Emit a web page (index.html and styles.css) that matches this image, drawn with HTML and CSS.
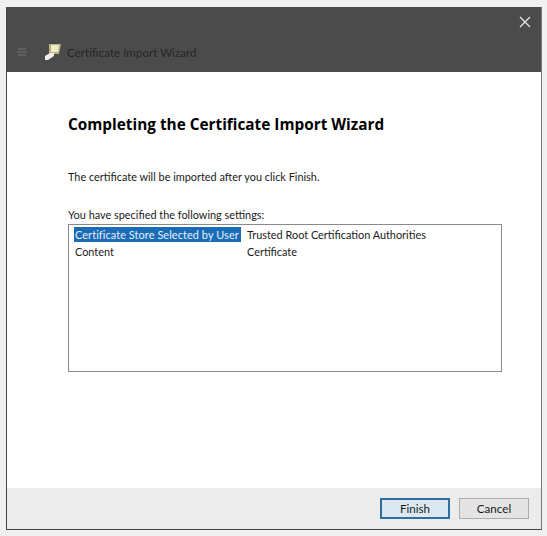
FILE: index.html
```html
<!DOCTYPE html>
<html lang="en">
<head>
<meta charset="utf-8">
<title>Certificate Import Wizard</title>
<link rel="stylesheet" href="styles.css">
</head>
<body>
<div class="window">
  <header class="titlebar">
    <div class="close-row">
      <svg class="close" width="12" height="12" viewBox="0 0 12 12"><path d="M1 1L11 11M11 1L1 11" stroke="#e8e8e8" stroke-width="1.2" fill="none"/></svg>
    </div>
    <div class="title-row">
      <svg class="back" width="12" height="8" viewBox="0 0 12 8"><path d="M2 1H10M1 4H11M2 7H10" stroke="#666" stroke-width="1.4" fill="none"/></svg>
      <svg class="cert" width="18" height="18" viewBox="0 0 18 18"><path d="M5 1H17L15 11H5Z" fill="#b9b27c"/><path d="M7 2H15L14 9H7Z" fill="#efeacb"/><path d="M1 13L6 10H10V13L4 17H1Z" fill="#f0f0e8"/></svg>
      <span class="title-text">Certificate Import Wizard</span>
    </div>
  </header>
  <main class="content">
    <h1 class="heading">Completing the Certificate Import Wizard</h1>
    <p class="intro">The certificate will be imported after you click Finish.</p>
    <p class="label">You have specified the following settings:</p>
    <div class="list">
      <div class="row"><span class="cell-a selected">Certificate Store Selected by User</span><span class="cell-b">Trusted Root Certification Authorities</span></div>
      <div class="row"><span class="cell-a">Content</span><span class="cell-b">Certificate</span></div>
    </div>
  </main>
  <footer class="footer">
    <button class="btn primary">Finish</button>
    <button class="btn">Cancel</button>
  </footer>
</div>
</body>
</html>
```
FILE: styles.css
```css
* { box-sizing: border-box; }
html, body { margin: 0; padding: 0; }
body {
  width: 547px;
  height: 536px;
  background: #f0f0f0;
  padding: 7px 5px 6px 6px;
  font-family: "Lato", "Open Sans", sans-serif;
  font-size: 10.9px;
  color: #1a1a1a;
}
.window {
  height: 523px;
  display: flex;
  flex-direction: column;
  border-right: 1px solid #777;
  border-bottom: 1px solid #444;
  border-left: 1px solid #444;
  background: #fff;
}
.titlebar {
  height: 65px;
  flex: none;
  background: #4b4b4b;
  display: flex;
  flex-direction: column;
  justify-content: space-between;
  padding-bottom: 11px;
}
.close-row { display: flex; justify-content: flex-end; padding: 9px 10px 0 0; }
.title-row { display: flex; align-items: center; padding-left: 9px; }
.back { margin-right: 16px; }
.cert { margin-right: 5px; }
.title-text { color: #262626; font-size: 11.6px; filter: blur(0.6px); }
.content { flex: 1; padding: 41px 39px 0 61px; }
.heading {
  margin: 0;
  font-family: "Open Sans", sans-serif;
  font-size: 15.35px;
  line-height: 22px;
  font-weight: 700;
  color: #000;
}
.intro { margin: 34px 0 0; line-height: 16px; }
.label { margin: 22px 0 0; line-height: 16px; }
.list {
  margin-top: 1px;
  height: 148px;
  border: 1px solid #8a8a8a;
  padding: 1px 5px;
}
.row { display: flex; height: 17px; align-items: center; }
.cell-a { width: 172px; flex: none; padding: 0 1px; line-height: 15px; }
.selected { width: 167px; margin-right: 5px; background: #1a6cb6; color: #e8f0f8; white-space: nowrap; letter-spacing: 0.09px; }
.cell-b { padding-left: 1px; }
.footer {
  height: 41px;
  flex: none;
  background: #ececec;
  display: flex;
  justify-content: flex-end;
  align-items: flex-start;
  gap: 9px;
  padding: 10px 12px 0 0;
}
.btn {
  width: 70px;
  height: 21px;
  padding: 0;
  font: inherit;
  font-size: 11.6px;
  color: #1a1a1a;
  background: #e4e4e4;
  border: 1px solid #adadad;
}
.primary { background: #dbe8f2; border: 2px solid #2f6f9f; }
```
